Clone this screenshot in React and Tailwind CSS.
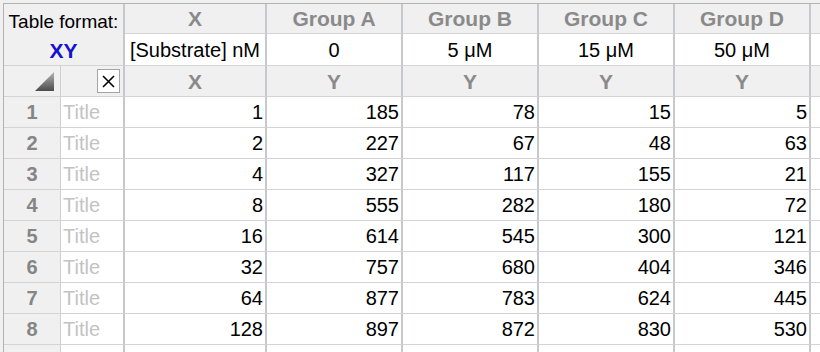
import React from "react";

const groups = ["Group A", "Group B", "Group C", "Group D"];
const concentrations = ["0", "5 μM", "15 μM", "50 μM"];

const rows = [
	[1, 185, 78, 15, 5],
	[2, 227, 67, 48, 63],
	[4, 327, 117, 155, 21],
	[8, 555, 282, 180, 72],
	[16, 614, 545, 300, 121],
	[32, 757, 680, 404, 346],
	[64, 877, 783, 624, 445],
	[128, 897, 872, 830, 530],
	["", "", "", "", ""],
];

// vertical lines are 2px and a touch darker than the 1px row lines
const cell = "border-b border-b-[#d4d4d4] border-r-2 border-r-[#c5c8cc]";
const headText = "font-bold text-[#8a8a8a] text-[21px]";

function CornerTriangle() {
	return (
		<svg width="19" height="19" viewBox="0 0 19 19">
			<defs>
				<linearGradient id="tri" x1="0" y1="0" x2="0" y2="1">
					<stop offset="0" stopColor="#b4b4b4" />
					<stop offset="1" stopColor="#4c4c4c" />
				</linearGradient>
			</defs>
			<polygon points="19,0 19,19 0,19" fill="url(#tri)" />
		</svg>
	);
}

function CloseBox() {
	return (
		<div className="w-[23px] h-[24px] border border-[#a4a4a4] bg-white flex items-center justify-center">
			<svg width="13" height="13" viewBox="0 0 13 13">
				<path d="M1 1 L12 12 M12 1 L1 12" stroke="#000" strokeWidth="1.6" />
			</svg>
		</div>
	);
}

export default function App() {
	return (
		<div className="w-[820px] h-[352px] overflow-hidden bg-[#f0f0f0] pt-[3px] pl-[3px] font-['Liberation_Sans',Arial,sans-serif] leading-none">
			<div className="grid grid-cols-[57px_64px_142px_136px_136px_136px_136px_1fr] grid-rows-[30px_32px_31px_repeat(9,31px)] border-t border-l border-[#b2b2b2]">
				{/* table format corner */}
				<div className={`col-span-2 row-span-2 bg-[#f0f0f0] flex flex-col items-center pt-[8px] gap-[9px] ${cell}`}>
					<span className="text-[19px] text-black">Table format:</span>
					<span className="text-[21px] font-bold text-[#1212d0]">XY</span>
				</div>
				<div className={`bg-[#f0f0f0] flex items-center justify-center ${cell}`}>
					<span className={headText}>X</span>
				</div>
				{groups.map((g) => (
					<div key={g} className={`bg-[#f0f0f0] flex items-center justify-center ${cell}`}>
						<span className={headText}>{g}</span>
					</div>
				))}
				<div className="bg-[#f0f0f0] border-b border-[#d4d4d4]" />

				{/* column titles */}
				<div className={`bg-white flex items-center justify-center text-[20px] text-black ${cell}`}>
					[Substrate] nM
				</div>
				{concentrations.map((c) => (
					<div key={c} className={`bg-white flex items-center justify-center text-[20px] text-black ${cell}`}>
						{c}
					</div>
				))}
				<div className="bg-white border-b border-[#d4d4d4]" />

				{/* X / Y row */}
				<div className="bg-[#f0f0f0] flex items-center justify-end pr-[6px] border-b border-b-[#d4d4d4] border-r border-r-[#cfcfcf]">
					<CornerTriangle />
				</div>
				<div className={`bg-[#f0f0f0] flex items-center justify-end pr-[3px] ${cell}`}>
					<CloseBox />
				</div>
				<div className={`bg-[#f0f0f0] flex items-center justify-center ${cell}`}>
					<span className={headText}>X</span>
				</div>
				{groups.map((g) => (
					<div key={g} className={`bg-[#f0f0f0] flex items-center justify-center ${cell}`}>
						<span className={headText}>Y</span>
					</div>
				))}
				<div className="bg-[#f0f0f0] border-b border-[#d4d4d4]" />

				{/* data rows */}
				{rows.map((r, i) => (
					<React.Fragment key={i}>
						<div className="bg-[#f0f0f0] flex items-center justify-center border-b border-b-[#d4d4d4] border-r border-r-[#cfcfcf]">
							<span className="font-bold text-[20px] text-[#858585]">{i + 1}</span>
						</div>
						<div className={`bg-white flex items-center pl-[2px] ${cell}`}>
							<span className="text-[20px] text-[#c3c3c3]">Title</span>
						</div>
						{r.map((v, j) => (
							<div key={j} className={`bg-white flex items-center justify-end pr-[2px] text-[20px] text-black ${cell}`}>
								{v}
							</div>
						))}
						<div className="bg-white border-b border-[#d4d4d4]" />
					</React.Fragment>
				))}
			</div>
		</div>
	);
}
